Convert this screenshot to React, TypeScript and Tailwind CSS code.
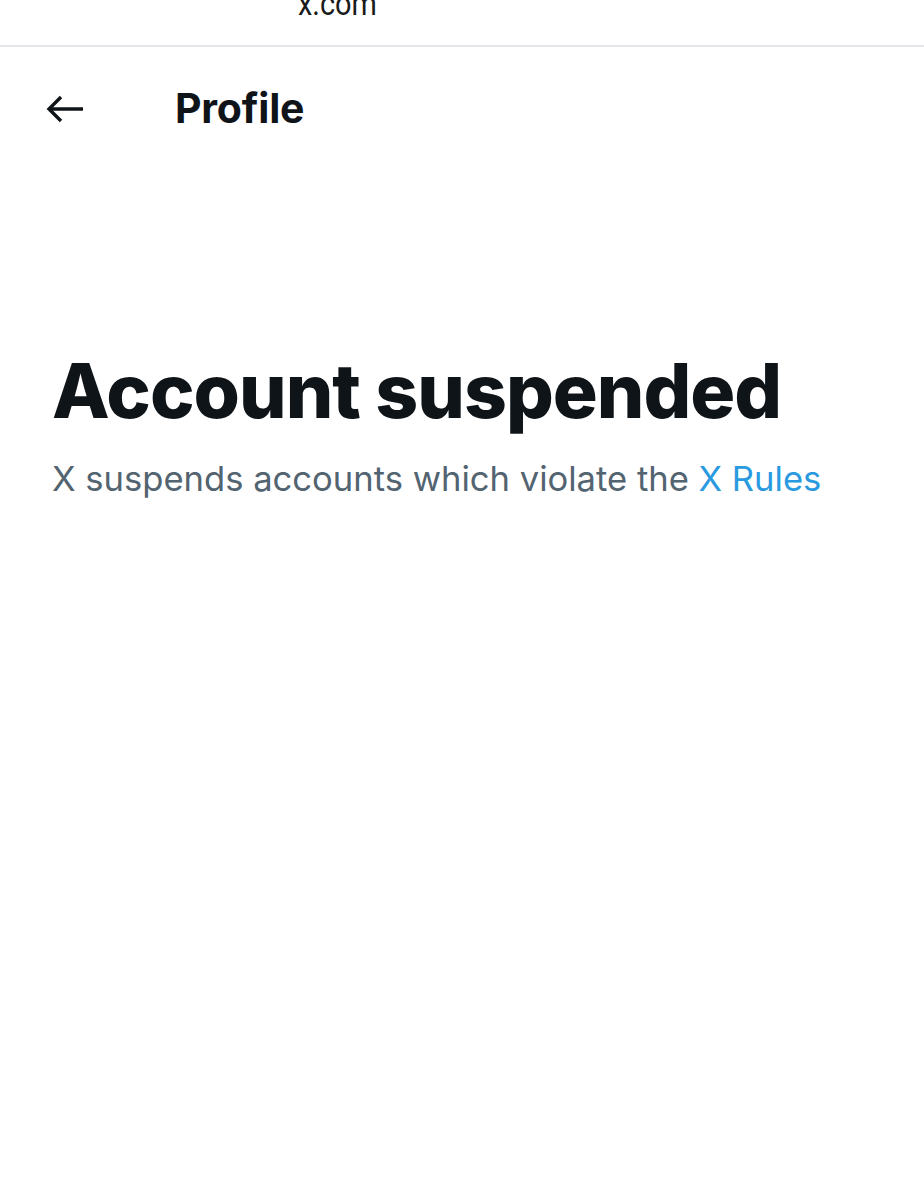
import React from "react";

export default function App() {
  return (
    <div className="w-[924px] h-[1199px] bg-white overflow-hidden" style={{ fontFamily: "Inter, 'Noto Sans', sans-serif" }}>
      <div className="h-[47px] border-b-2 border-[#e3e5e8] flex justify-center">
        <div className="mt-[-14px] ml-[-250px] text-[34px] leading-[34px] text-[#1a1a1a] font-['Roboto'] scale-x-[0.85]">x.com</div>
      </div>
      <div className="h-[120px] flex items-center pl-[46px] pt-[4px]">
        <svg width="37" height="28" viewBox="0 0 37 28" fill="none" stroke="#0f1419" strokeWidth="3.4" strokeLinecap="butt" strokeLinejoin="miter">
          <path d="M37 14H3" />
          <path d="M15 2L3 14L15 26" />
        </svg>
        <div className="ml-[92px] text-[41px] font-bold text-[#0f1419] tracking-[-0.2px]">Profile</div>
      </div>
      <div className="pl-[53px] pt-[184px]">
        <h1 className="text-[75px] leading-[80px] font-extrabold text-[#0f1419] tracking-[-1px] ml-[-1px]">Account suspended</h1>
        <p className="mt-[25px] text-[34.6px] leading-[44px] text-[#536471] ml-[-1px]">
          X suspends accounts which violate the <span className="text-[#2a9ae0]">X Rules</span>
        </p>
      </div>
    </div>
  );
}
